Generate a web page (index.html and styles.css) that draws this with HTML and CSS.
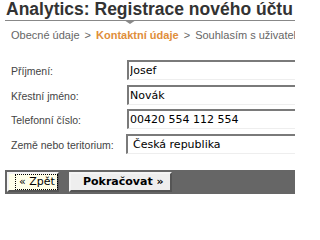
FILE: index.html
```html
<!DOCTYPE html>
<html lang="cs">
<head>
<meta charset="utf-8">
<title>Analytics: Registrace nového účtu</title>
<link rel="stylesheet" href="styles.css">
</head>
<body>
<div class="page">
  <h1 class="title">Analytics: Registrace nového účtu</h1>
  <div class="crumbs">
    <span class="step">Obecné údaje</span>
    <span class="sep">&gt;</span>
    <span class="step current">Kontaktní údaje</span>
    <span class="sep">&gt;</span>
    <span class="step">Souhlasím s uživatelskou smlouvou</span>
  </div>
  <form class="form">
    <label class="label" for="f1">Příjmení:</label>
    <input class="field" id="f1" type="text" value="Josef">
    <label class="label" for="f2">Křestní jméno:</label>
    <input class="field" id="f2" type="text" value="Novák">
    <label class="label" for="f3">Telefonní číslo:</label>
    <input class="field" id="f3" type="text" value="00420 554 112 554">
    <label class="label" for="f4">Země nebo teritorium:</label>
    <div class="field select" id="f4">Česká republika</div>
  </form>
  <div class="bar">
    <button class="btn back" type="button"><span class="focus">« Zpět</span></button>
    <button class="btn next" type="button">Pokračovat »</button>
  </div>
</div>
</body>
</html>
```
FILE: styles.css
```css
html, body {
  margin: 0;
  padding: 0;
  background: #fff;
  overflow: hidden;
}
.page {
  width: 295px;
  height: 206px;
  overflow: hidden;
  padding-left: 5px;
  box-sizing: border-box;
  font-family: "Liberation Sans", Arial, sans-serif;
}
.title {
  position: relative;
  margin: 0;
  padding: 0 0 1px 1px;
  font-size: 17.5px;
  line-height: 19px;
  font-weight: bold;
  color: #333;
  white-space: nowrap;
  border-bottom: 1px solid #888;
}
.title::after {
  content: "";
  position: absolute;
  left: 119px;
  top: 100%;
  border-left: 6px solid transparent;
  border-right: 6px solid transparent;
  border-top: 4px solid #888;
}
.crumbs {
  margin-top: 8px;
  padding-left: 6px;
  font-size: 11px;
  line-height: 13px;
  color: #666;
  white-space: nowrap;
  overflow: hidden;
}
.sep {
  margin: 0 2px;
}
.current {
  color: #e08e3a;
  font-weight: bold;
}
.form {
  margin: 18px 0 0;
  display: grid;
  grid-template-columns: 116px 200px;
  row-gap: 4.7px;
  padding-left: 6px;
  align-items: center;
}
.label {
  font-size: 10.5px;
  color: #444;
  padding-top: 2px;
  white-space: nowrap;
}
.field {
  box-sizing: border-box;
  height: 20px;
  width: 200px;
  margin: 0;
  padding: 0 0 0 1px;
  border-top: 2px solid #7a7a7a;
  border-left: 2px solid #7a7a7a;
  border-right: 1px solid #ddd;
  border-bottom: 1px solid #eee;
  font-family: "DejaVu Sans", sans-serif;
  font-size: 11px;
  color: #000;
  background: #fff;
  outline: none;
}
.select {
  display: flex;
  align-items: center;
  padding-left: 5px;
  margin-left: -1px;
}
.bar {
  margin-top: 16px;
  height: 24px;
  background: #666;
  display: flex;
  align-items: center;
  gap: 10px;
  padding-left: 2px;
}
.btn {
  box-sizing: border-box;
  height: 20px;
  margin: 0;
  border-style: solid;
  border-width: 2px;
  border-color: #f4f4f4 #555 #555 #f4f4f4;
  font-family: "DejaVu Sans", sans-serif;
  font-size: 11px;
  color: #000;
  display: flex;
  align-items: center;
  line-height: 14px;
  white-space: nowrap;
  flex: none;
}
.back {
  width: 52px;
  background: #ffffe8;
  padding: 0 0 0 6px;
}
.focus {
  border: 1px dotted #000;
  padding: 0 2px 0 3px;
  line-height: 14px;
}
.next {
  width: 103px;
  background: #eee;
  font-weight: bold;
  padding: 0 0 0 12px;
}
```
